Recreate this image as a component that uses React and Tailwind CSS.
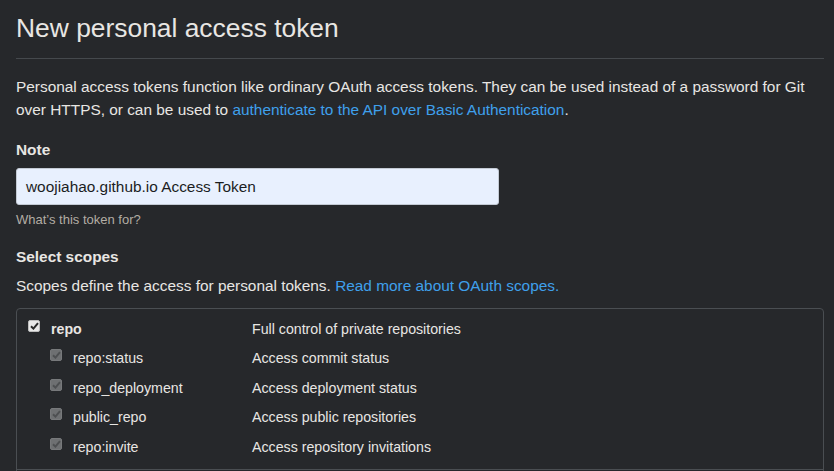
import React from "react";

function Check({ disabled }) {
  return (
    <div
      className={
        disabled
          ? "w-[12px] h-[12px] rounded-[2px] bg-[#6e7072] border border-[#77797b] flex items-center justify-center"
          : "w-[12px] h-[12px] rounded-[2px] bg-[#e9e9e9] border border-[#bdbdbd] flex items-center justify-center"
      }
    >
      <svg width="9" height="8" viewBox="0 0 9 8">
        <path
          d="M1 4.3 L3.4 6.6 L8 1.2"
          fill="none"
          stroke={disabled ? "#4e5052" : "#2a2a2a"}
          strokeWidth="2"
        />
      </svg>
    </div>
  );
}

const subs = [
  ["repo:status", "Access commit status"],
  ["repo_deployment", "Access deployment status"],
  ["public_repo", "Access public repositories"],
  ["repo:invite", "Access repository invitations"],
];

export default function App() {
  return (
    <div
      className="min-h-[471px] bg-[#26282b] text-[#e8e6e3] pl-4 pr-[10px]"
      style={{ fontFamily: '"Liberation Sans", Arial, sans-serif' }}
    >
      <div className="pt-[13px] pb-[15px] border-b border-[#45494d]">
        <h1 className="text-[26.4px] leading-[30px] font-normal">New personal access token</h1>
      </div>
      <p className="mt-4 text-[15.4px] leading-[23px] pr-[18px]">
        Personal access tokens function like ordinary OAuth access tokens. They can be used instead of a password for Git over HTTPS, or can be used to{" "}
        <span className="text-[#3fa0ec]">authenticate to the API over Basic Authentication</span>.
      </p>
      <div className="mt-[17px] text-[15.4px] leading-[23px] font-bold">Note</div>
      <div className="mt-[7px] w-[483px] h-[37px] rounded-[3px] bg-[#e8f0fe] border border-[#c3cad4] flex items-center pl-[9px] text-[15.4px] text-[#1b1d1f]">
        woojiahao.github.io Access Token
      </div>
      <div className="mt-[5px] text-[13px] leading-[20px] text-[#b3ada4]">What’s this token for?</div>
      <div className="mt-[15px] text-[15.4px] leading-[23px] font-bold">Select scopes</div>
      <div className="mt-[6px] text-[15.4px] leading-[23px]">
        Scopes define the access for personal tokens.{" "}
        <span className="text-[#3fa0ec]">Read more about OAuth scopes.</span>
      </div>
      <div className="mt-[11px] border border-[#4a4e52] rounded-[4px] text-[14.2px]">
        <div className="pt-[5px] pb-[7px] border-b border-[#4a4e52]">
          <div className="flex h-[30px] leading-[30px] pl-[11px]">
            <div className="w-[224px] flex items-start">
              <div className="mt-[6px]"><Check /></div>
              <span className="ml-[11px] font-bold">repo</span>
            </div>
            <div>Full control of private repositories</div>
          </div>
          {subs.map(([n, d]) => (
            <div key={n} className="flex h-[29.5px] leading-[29.5px] pl-[11px]">
              <div className="w-[224px] flex items-start pl-[22px]">
                <div className="mt-[5px]"><Check disabled /></div>
                <span className="ml-[11px]">{n}</span>
              </div>
              <div>{d}</div>
            </div>
          ))}
        </div>
        <div className="flex h-[30px] leading-[30px] pl-[11px] pt-[8px]">
          <div className="w-[224px] flex items-start">
            <div className="mt-[7px]"><Check /></div>
            <span className="ml-[11px] font-bold">workflow</span>
          </div>
          <div>Update GitHub Action workflows</div>
        </div>
      </div>
    </div>
  );
}
